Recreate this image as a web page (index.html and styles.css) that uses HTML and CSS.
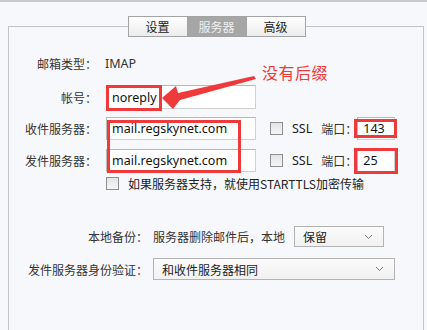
FILE: index.html
```html
<!DOCTYPE html>
<html lang="zh-CN">
<head>
<meta charset="utf-8">
<title>服务器设置</title>
<link rel="stylesheet" href="styles.css">
</head>
<body>
<div class="topbar"></div>
<div class="panel">
  <div class="tabs">
    <div class="tab">设置</div>
    <div class="tab active">服务器</div>
    <div class="tab">高级</div>
  </div>
  <div class="form">
    <div class="row r1">
      <div class="label">邮箱类型：</div>
      <div class="value">IMAP</div>
    </div>
    <div class="row r2">
      <div class="label">帐号：</div>
      <div class="input wide">noreply</div>
    </div>
    <div class="row r3">
      <div class="label">收件服务器：</div>
      <div class="input wide">mail.regskynet.com</div>
      <span class="cb cb-ssl"></span>
      <span class="ssl">SSL</span>
      <span class="port-label">端口：</span>
      <div class="input port">143</div>
    </div>
    <div class="row r4">
      <div class="label">发件服务器：</div>
      <div class="input wide">mail.regskynet.com</div>
      <span class="cb cb-ssl"></span>
      <span class="ssl">SSL</span>
      <span class="port-label">端口：</span>
      <div class="input port">25</div>
    </div>
    <div class="row r5">
      <span class="cb cb-tls"></span>
      <span class="tls-text">如果服务器支持，就使用STARTTLS加密传输</span>
    </div>
    <div class="row r6">
      <div class="label label2">本地备份：</div>
      <span class="plain">服务器删除邮件后，本地</span>
      <div class="select small"><span>保留</span><svg class="chev" width="9" height="6" viewBox="0 0 9 6"><path d="M1 1 L4.5 4.5 L8 1" fill="none" stroke="#777" stroke-width="1"/></svg></div>
    </div>
    <div class="row r7">
      <div class="label label2">发件服务器身份验证：</div>
      <div class="select big"><span>和收件服务器相同</span><svg class="chev" width="9" height="6" viewBox="0 0 9 6"><path d="M1 1 L4.5 4.5 L8 1" fill="none" stroke="#777" stroke-width="1"/></svg></div>
    </div>
  </div>
</div>

<div class="note">没有后缀</div>
<svg class="arrow" width="110" height="40" viewBox="150 72 110 40">
  <polygon points="162,98 176,86 178,93 254,76 256,79 180,100 173,109" fill="#f0393b"/>
</svg>
<div class="mark m-account"></div>
<div class="mark m-servers"></div>
<div class="mark m-port1"></div>
<div class="mark m-port2"></div>
</body>
</html>
```
FILE: styles.css
```css
html, body {
  margin: 0;
  padding: 0;
}
body {
  width: 427px;
  height: 330px;
  overflow: hidden;
  background: #f7f8fc;
  font-family: "Noto Sans", "Noto Sans CJK SC", sans-serif;
  font-size: 12px;
  color: #2b2b2b;
  position: relative;
}
.topbar {
  height: 2px;
  background: #c9c9cf;
}
.panel {
  margin: 24px 3px 0 8px;
  height: 304px;
  border: 1px solid #c4c4c4;
  border-bottom: none;
  box-sizing: border-box;
}
.tabs {
  display: flex;
  justify-content: center;
  margin-top: -11px;
  margin-left: 2px;
}
.tab {
  width: 60px;
  height: 21px;
  box-sizing: border-box;
  border: 1px solid #a3a3a3;
  background: linear-gradient(#ffffff, #ececec);
  display: flex;
  align-items: center;
  justify-content: center;
  font-family: "Noto Sans CJK SC", sans-serif;
  font-size: 12px;
  color: #222;
  margin-left: -1px;
}
.tab.active {
  background: #a6a6a6;
  color: #efefef;
}
.form {
  display: flex;
  flex-direction: column;
}
.row {
  display: flex;
  align-items: center;
}
.r1 { height: 23px; margin-top: 15px; }
.r2 { height: 24px; margin-top: 10px; }
.r3 { height: 23px; margin-top: 8px; }
.r4 { height: 23px; margin-top: 9px; }
.r5 { height: 16px; margin-top: 3px; }
.r6 { height: 21px; margin-top: 35px; }
.r7 { height: 22px; margin-top: 11px; }
.label {
  width: 88px;
  text-align: right;
  margin-right: 9px;
  font-family: "Noto Sans CJK SC", sans-serif;
  color: #333;
}
.label2 {
  width: 139px;
  margin-right: 5px;
}
.value {
  margin-left: -1px;
  font-size: 12.5px;
  color: #333;
}
.input {
  height: 100%;
  box-sizing: border-box;
  background: #fff;
  border: 1px solid #b8b8b8;
  border-right-color: #d0d0d0;
  border-bottom-color: #d0d0d0;
  display: flex;
  align-items: center;
  padding-left: 5px;
  font-size: 12.5px;
  color: #111;
}
.input.wide { width: 150px; }
.input.port { width: 38px; margin-left: 0; }
.cb {
  width: 13px;
  height: 13px;
  box-sizing: border-box;
  border: 1px solid #8e8e8e;
  background: linear-gradient(#e4e4e4, #f6f6f6);
  flex: none;
}
.cb-ssl { margin-left: 14px; }
.ssl {
  margin-left: 9px;
  font-size: 12.5px;
  color: #222;
}
.port-label {
  margin-left: 9px;
  width: 36px;
  flex: none;
  font-family: "Noto Sans CJK SC", sans-serif;
  color: #333;
}
.cb-tls { margin-left: 97px; }
.tls-text {
  margin-left: 9px;
  font-family: "Noto Sans CJK SC", sans-serif;
  color: #222;
}
.plain {
  font-family: "Noto Sans CJK SC", sans-serif;
  color: #333;
  margin-right: 9px;
}
.select {
  height: 100%;
  box-sizing: border-box;
  border: 1px solid #b3b3b3;
  background: linear-gradient(#fbfbfb, #f1f1f1);
  display: flex;
  align-items: center;
  justify-content: space-between;
  padding: 0 10px 0 8px;
  font-family: "Noto Sans CJK SC", sans-serif;
  color: #222;
}
.select.small { width: 90px; }
.select.big { width: 242px; }
.chev { display: block; }
.note {
  position: absolute;
  left: 262px;
  top: 60px;
  font-family: "Noto Sans CJK SC", sans-serif;
  font-size: 16px;
  color: #f0393b;
  letter-spacing: 0.5px;
}
.arrow {
  position: absolute;
  left: 150px;
  top: 72px;
}
.mark {
  position: absolute;
  border: 3px solid #f0393b;
  box-sizing: border-box;
}
.m-account { left: 106px; top: 85px; width: 56px; height: 26px; }
.m-servers { left: 107px; top: 120px; width: 134px; height: 53px; }
.m-port1 { left: 354px; top: 119px; width: 43px; height: 19px; }
.m-port2 { left: 354px; top: 148px; width: 44px; height: 26px; }
```
